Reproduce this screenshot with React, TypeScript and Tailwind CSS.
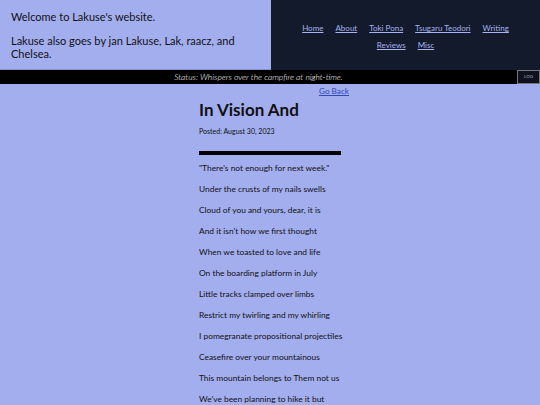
import React from "react";

const poem = [
  "\"There's not enough for next week.\"",
  "Under the crusts of my nails swells",
  "Cloud of you and yours, dear, it is",
  "And it isn't how we first thought",
  "When we toasted to love and life",
  "On the boarding platform in July",
  "Little tracks clamped over limbs",
  "Restrict my twirling and my whirling",
  "I pomegranate propositional projectiles",
  "Ceasefire over your mountainous",
  "This mountain belongs to Them not us",
  "We've been planning to hike it but",
];

const links = ["Home", "About", "Toki Pona", "Tsugaru Teodori", "Writing", "Reviews", "Misc"];

export default function App() {
  return (
    <div className="min-h-[405px] w-[540px] bg-[#a3aeef] text-[#111] font-['Lato',sans-serif] overflow-hidden">
      {/* header */}
      <div className="flex h-[70px]">
        <div className="w-[271px] px-[11px] pt-[10px] text-[11px] leading-[13px] border-b border-[#8490cc]">
          <p>Welcome to Lakuse's website.</p>
          <p className="mt-[11px]">Lakuse also goes by jan Lakuse, Lak, raacz, and Chelsea.</p>
        </div>
        <nav className="flex-1 bg-[#131a2b] flex flex-wrap justify-center content-start gap-x-[12px] gap-y-[5px] px-[28px] pt-[22px] text-[8px] leading-[12px]">
          {links.map((l) => (
            <a key={l} href="#" className="text-[#a7b2f0] underline">
              {l}
            </a>
          ))}
        </nav>
      </div>

      {/* status bar */}
      <div className="flex h-[14px] bg-black">
        <div className="flex-1 flex items-center justify-center text-white italic font-light text-[8.5px]">
          Status: Whispers over the campfire at night-time.
        </div>
        <div className="w-[23px] border border-[#777] bg-[#0d1120] text-[#aaa] text-[4.5px] flex items-center justify-center">
          LOG
        </div>
      </div>

      {/* post */}
      <div className="ml-[199px] w-[150px]">
        <div className="text-right text-[8.2px] leading-[12px] mt-[1px]">
          <a href="#" className="text-[#2f47b8] underline">Go Back</a>
        </div>
        <h1 className="text-[17px] font-bold leading-[20px] mt-[3px]">In Vision And</h1>
        <p className="text-[7px] mt-[6px]">Posted: August 30, 2023</p>
        <div className="w-[142px] h-[4px] bg-black mt-[14px]" />
        <div className="mt-[8px] flex flex-col gap-[11px] text-[8.4px] leading-[10px] whitespace-nowrap">
          {poem.map((line) => (
            <p key={line}>{line}</p>
          ))}
        </div>
      </div>
    </div>
  );
}
